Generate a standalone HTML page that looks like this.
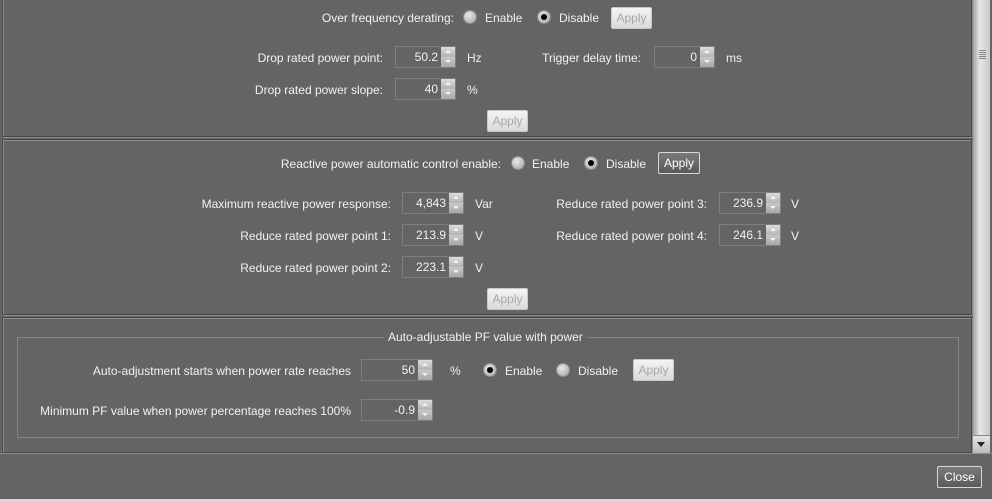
<!DOCTYPE html>
<html><head><style>
body{margin:0;width:992px;height:502px;background:#646464;font-family:"Liberation Sans",sans-serif;font-size:12px;color:#f2f2f2;position:relative;overflow:hidden}
.a{position:absolute;white-space:nowrap;line-height:14px}
.r{position:absolute;text-align:right;white-space:nowrap;line-height:14px}
.p{position:absolute;border:1px solid #484848;box-shadow:inset 1px 1px 0 #8c8c8c,1px 1px 0 #8c8c8c}
.f{position:absolute;height:20px;border:1px solid #7e7e7e;box-sizing:content-box}
.f span{position:absolute;right:17px;top:3px;line-height:14px}
.f i{position:absolute;right:0;top:0;width:14px;height:20px;background:linear-gradient(#dcdcdc,#b4b4b4 50%,#c8c8c8 50%,#a8a8a8)}
.f i:before{content:"";position:absolute;left:4px;top:3px;border:3px solid transparent;border-bottom:3px solid #f4f4f4;border-top:0}
.f i:after{content:"";position:absolute;left:4px;top:13px;border:3px solid transparent;border-top:3px solid #f4f4f4;border-bottom:0}
.rd{position:absolute;width:12px;height:12px;border-radius:50%;background:radial-gradient(circle at 40% 35%,#e8e8e8,#a0a0a0);border:1px solid #8a8a8a}
.rd.s:after{content:"";position:absolute;left:3px;top:3px;width:6px;height:6px;border-radius:50%;background:#000}
.bd{position:absolute;height:20px;border:1px solid #c8c8c8;border-radius:2px;background:linear-gradient(#f4f4f4,#dadada);color:#a8a8a8;text-align:center;line-height:20px;box-sizing:content-box}
.be{position:absolute;height:20px;border:1px solid #d8d8d8;border-radius:2px;background:linear-gradient(#7a7a7a,#5a5a5a);color:#fff;text-align:center;line-height:20px}
</style></head><body>
<div class="p" style="left:2px;top:-3px;width:968px;height:138px"></div>
<div class="p" style="left:2px;top:139px;width:968px;height:174px"></div>
<div class="p" style="left:2px;top:317px;width:968px;height:134px"></div>
<div style="position:absolute;left:0;top:453px;width:992px;height:1px;background:#8c8c8c"></div>
<div style="position:absolute;left:0;top:499px;width:992px;height:3px;background:#d8d8d8"></div>
<div style="position:absolute;left:973px;top:0;width:17px;height:452px;background:linear-gradient(90deg,#a0a0a0,#e8e8e8 40%,#c8c8c8)"></div>
<div style="position:absolute;left:979px;top:50px;width:7px;height:9px;background:repeating-linear-gradient(#888 0 1px,transparent 1px 2px)"></div>
<div style="position:absolute;left:973px;top:435px;width:17px;height:17px;background:linear-gradient(#e4e4e4,#bcbcbc);border-top:1px solid #888"></div>
<div style="position:absolute;left:977px;top:442px;border:4px solid transparent;border-top:5px solid #222;border-bottom:0"></div>

<div class="r" style="left:150px;width:304px;top:11px">Over frequency derating:</div>
<div class="rd" style="left:463px;top:10px"></div><div class="a" style="left:485px;top:11px">Enable</div>
<div class="rd s" style="left:537px;top:10px"></div><div class="a" style="left:559px;top:11px">Disable</div>
<div class="bd" style="left:611px;top:7px;width:39px">Apply</div>

<div class="r" style="left:100px;width:283px;top:51px">Drop rated power point:</div>
<div class="f" style="left:395px;top:46px;width:59px"><span>50.2</span><i></i></div>
<div class="a" style="left:467px;top:51px">Hz</div>
<div class="r" style="left:400px;width:241px;top:51px">Trigger delay time:</div>
<div class="f" style="left:654px;top:46px;width:59px"><span>0</span><i></i></div>
<div class="a" style="left:726px;top:51px">ms</div>
<div class="r" style="left:100px;width:283px;top:83px">Drop rated power slope:</div>
<div class="f" style="left:395px;top:78px;width:59px"><span>40</span><i></i></div>
<div class="a" style="left:467px;top:83px">%</div>
<div class="bd" style="left:487px;top:110px;width:39px">Apply</div>

<div class="r" style="left:100px;width:401px;top:157px">Reactive power automatic control enable:</div>
<div class="rd" style="left:511px;top:156px"></div><div class="a" style="left:532px;top:157px">Enable</div>
<div class="rd s" style="left:584px;top:156px"></div><div class="a" style="left:606px;top:157px">Disable</div>
<div class="be" style="left:658px;top:152px;width:40px">Apply</div>

<div class="r" style="left:100px;width:291px;top:197px">Maximum reactive power response:</div>
<div class="f" style="left:402px;top:192px;width:60px"><span>4,843</span><i></i></div>
<div class="a" style="left:475px;top:197px">Var</div>
<div class="r" style="left:400px;width:307px;top:197px">Reduce rated power point 3:</div>
<div class="f" style="left:719px;top:192px;width:60px"><span>236.9</span><i></i></div>
<div class="a" style="left:791px;top:197px">V</div>
<div class="r" style="left:100px;width:291px;top:229px">Reduce rated power point 1:</div>
<div class="f" style="left:402px;top:224px;width:60px"><span>213.9</span><i></i></div>
<div class="a" style="left:475px;top:229px">V</div>
<div class="r" style="left:400px;width:307px;top:229px">Reduce rated power point 4:</div>
<div class="f" style="left:719px;top:224px;width:60px"><span>246.1</span><i></i></div>
<div class="a" style="left:791px;top:229px">V</div>
<div class="r" style="left:100px;width:291px;top:261px">Reduce rated power point 2:</div>
<div class="f" style="left:402px;top:256px;width:60px"><span>223.1</span><i></i></div>
<div class="a" style="left:475px;top:261px">V</div>
<div class="bd" style="left:487px;top:288px;width:39px">Apply</div>

<div style="position:absolute;left:17px;top:337px;width:940px;height:99px;border:1px solid #848484"></div>
<div class="a" style="left:384px;top:330px;padding:0 4px;background:#646464">Auto-adjustable PF value with power</div>
<div class="r" style="left:20px;width:331px;top:364px">Auto-adjustment starts when power rate reaches</div>
<div class="f" style="left:361px;top:359px;width:70px"><span>50</span><i></i></div>
<div class="a" style="left:450px;top:364px">%</div>
<div class="rd s" style="left:483px;top:363px"></div><div class="a" style="left:505px;top:364px">Enable</div>
<div class="rd" style="left:556px;top:363px"></div><div class="a" style="left:578px;top:364px">Disable</div>
<div class="bd" style="left:633px;top:359px;width:39px">Apply</div>
<div class="r" style="left:20px;width:331px;top:404px">Minimum PF value when power percentage reaches 100%</div>
<div class="f" style="left:361px;top:399px;width:70px"><span>-0.9</span><i></i></div>

<div class="be" style="left:937px;top:466px;width:43px">Close</div>
</body></html>
